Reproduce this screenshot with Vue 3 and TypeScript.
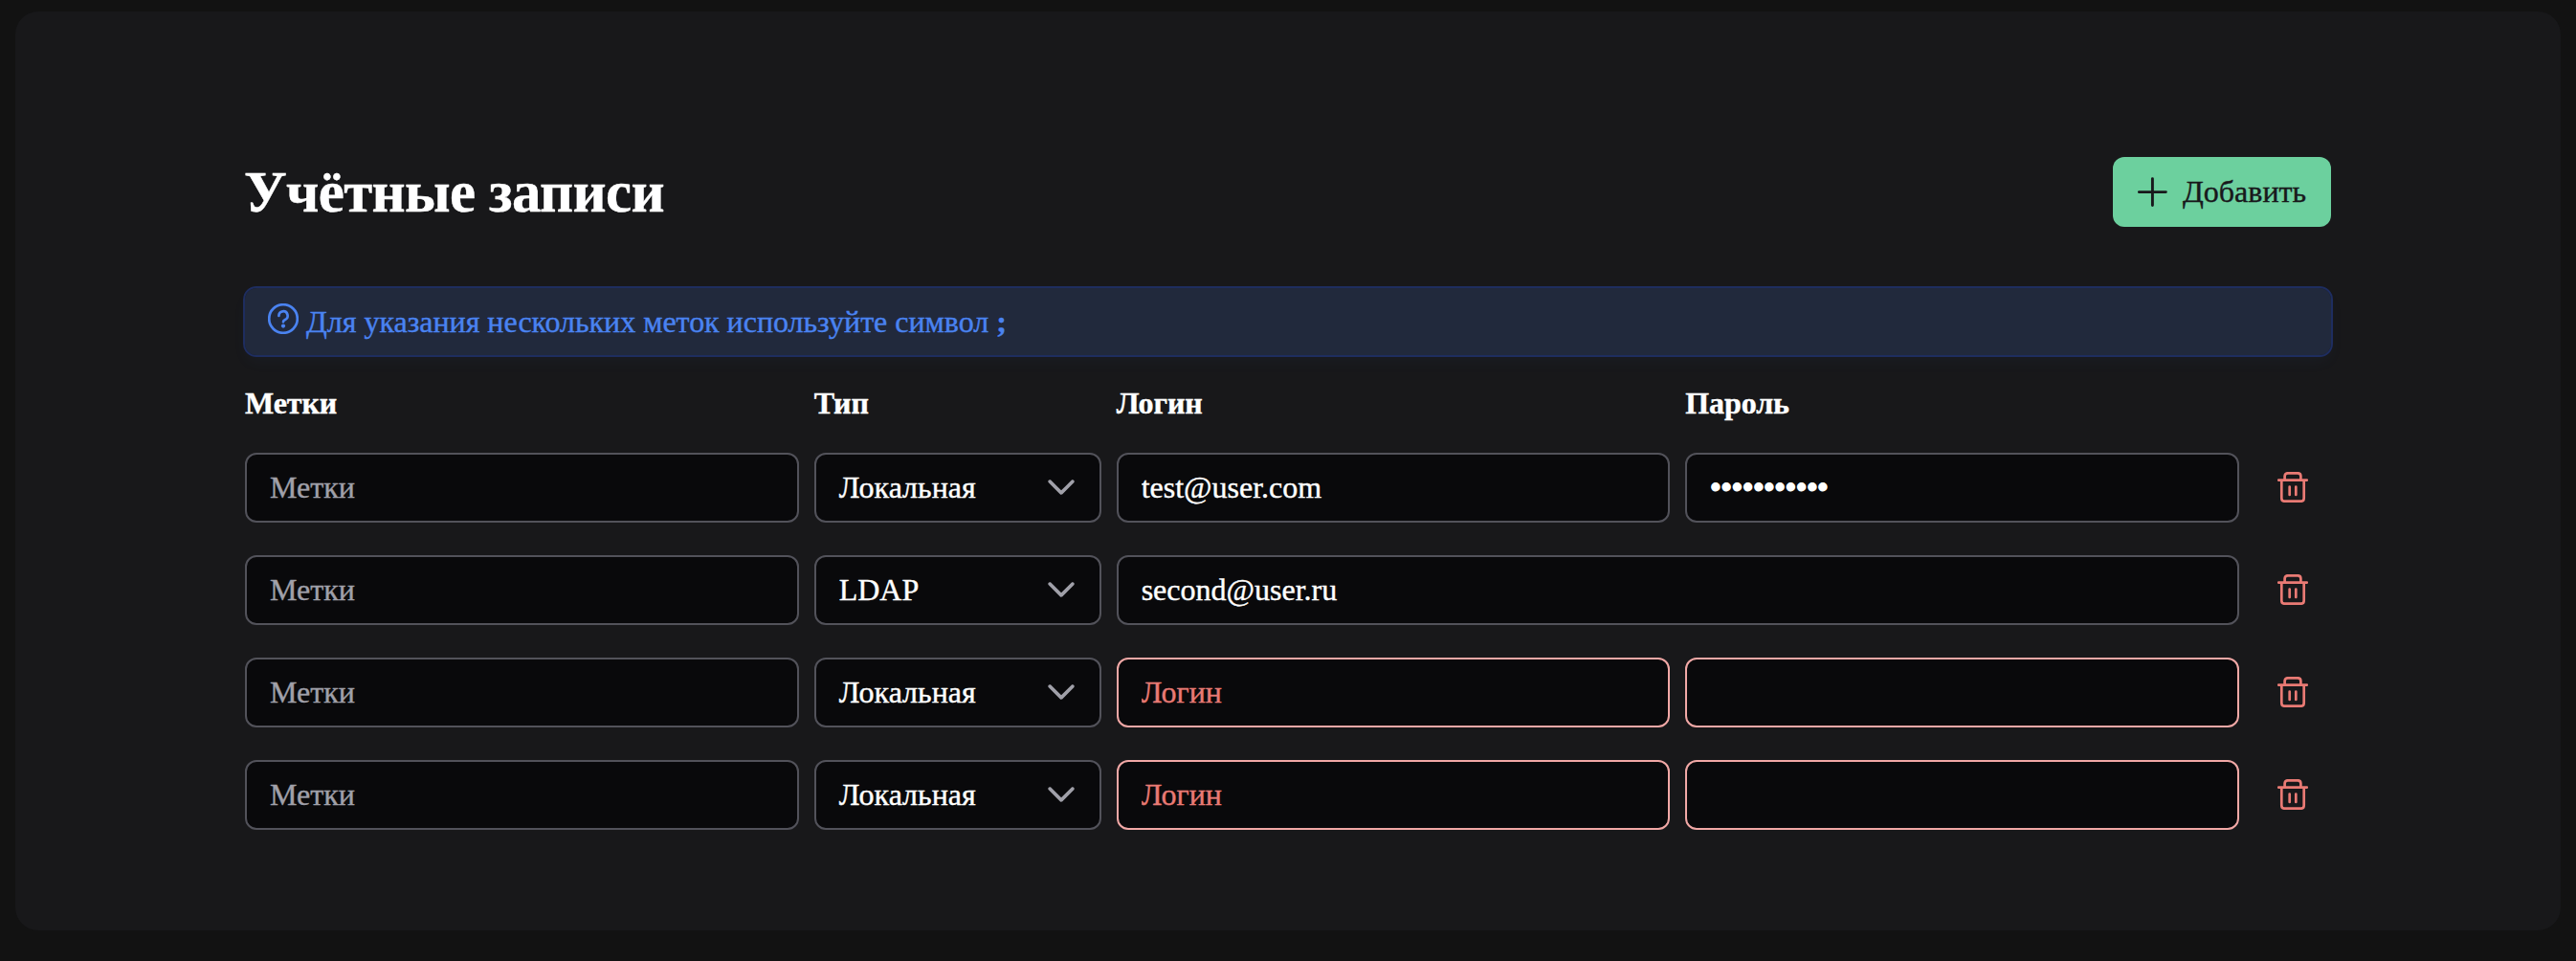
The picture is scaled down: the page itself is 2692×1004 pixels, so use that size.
<script setup lang="ts">
import { ref } from 'vue'

type AccountType = 'local' | 'ldap'

interface Account {
  id: number
  labels: string
  type: AccountType
  login: string
  password: string
  invalid: boolean
}

const typeNames: Record<AccountType, string> = { local: 'Локальная', ldap: 'LDAP' }

const accounts = ref<Account[]>([
  { id: 1, labels: '', type: 'local', login: 'test@user.com', password: 'password123', invalid: false },
  { id: 2, labels: '', type: 'ldap', login: 'second@user.ru', password: '', invalid: false },
  { id: 3, labels: '', type: 'local', login: '', password: '', invalid: true },
  { id: 4, labels: '', type: 'local', login: '', password: '', invalid: true },
])

let nextId = 5

function addAccount(): void {
  accounts.value.push({ id: nextId++, labels: '', type: 'local', login: '', password: '', invalid: false })
}

function removeAccount(id: number): void {
  accounts.value = accounts.value.filter((account) => account.id !== id)
}
</script>

<template>
  <main class="panel">
    <header class="head">
      <h1 class="title">Учётные записи</h1>
      <button class="add" type="button" @click="addAccount">
        <svg class="icon" viewBox="0 0 32 32" aria-hidden="true">
          <path d="M15.4 1.6v28M1.4 15.6h28" />
        </svg>
        <span>Добавить</span>
      </button>
    </header>

    <div class="message">
      <svg class="icon help" viewBox="0 0 32 32" aria-hidden="true">
        <circle cx="16" cy="16" r="14.8" />
        <path d="M11.4 12.9a4.6 4.6 0 1 1 6.6 4.1c-1.4.7-2 1.1-2 2.3" />
        <circle class="dot" cx="16" cy="23.6" r="2.1" />
      </svg>
      <span>Для указания нескольких меток используйте символ <b>;</b></span>
    </div>

    <div class="grid labels">
      <span>Метки</span>
      <span>Тип</span>
      <span>Логин</span>
      <span>Пароль</span>
    </div>

    <div class="rows">
      <div v-for="account in accounts" :key="account.id" class="grid">
        <input v-model="account.labels" class="field" type="text" placeholder="Метки" />
        <div class="field select">
          <span>{{ typeNames[account.type] }}</span>
          <svg class="chevron" viewBox="0 0 14 14" aria-hidden="true">
            <path
              d="M7.01744 10.398C6.91269 10.3985 6.8089 10.378 6.71215 10.3379C6.61541 10.2977 6.52766 10.2386 6.45405 10.1641L1.13907 4.84913C1.03306 4.69404 0.985221 4.5065 1.00399 4.31958C1.02276 4.13266 1.10693 3.95838 1.24166 3.82747C1.37639 3.69655 1.55301 3.61742 1.74039 3.60402C1.92777 3.59062 2.11386 3.64382 2.26584 3.75424L7.01744 8.47394L11.769 3.75424C11.9189 3.65709 12.097 3.61306 12.2748 3.62921C12.4527 3.64535 12.6199 3.72073 12.7498 3.84328C12.8797 3.96582 12.9647 4.12842 12.9912 4.30502C13.0177 4.48162 12.9841 4.662 12.8958 4.81724L7.58083 10.1322C7.50996 10.2125 7.42344 10.2775 7.32656 10.3232C7.22968 10.3689 7.12449 10.3944 7.01744 10.398Z"
            />
          </svg>
        </div>
        <input
          v-model="account.login"
          class="field"
          :class="{ invalid: account.invalid, wide: account.type === 'ldap' }"
          type="text"
          placeholder="Логин"
        />
        <input
          v-if="account.type === 'local'"
          v-model="account.password"
          class="field password"
          :class="{ invalid: account.invalid }"
          type="password"
        />
        <button class="remove" type="button" aria-label="Удалить" @click="removeAccount(account.id)">
          <svg class="icon" viewBox="0 0 32 32" aria-hidden="true">
            <path d="M1.2 8.6h29.6M4.3 8.6v18.9q0 3.2 3.2 3.2h17q3.2 0 3.2-3.2V8.6M7.6 8.6V4.5q0-3.2 3.2-3.2h10.4q3.2 0 3.2 3.2v4.1M12.7 15.5v8.4M19.3 15.5v8.4" />
          </svg>
        </button>
      </div>
    </div>
  </main>
</template>

<style>
body {
  background: #121212;
}
</style>

<style scoped>
.panel {
  box-sizing: border-box;
  height: 960px;
  margin: 12px 16px 0;
  padding: 152px 240px 0;
  border-radius: 24px;
  background: #18181a;
  color: #fff;
  font: 32px/37px "Liberation Serif", "Times New Roman", serif;
  -webkit-text-stroke: 0.4px currentColor;
}

.head {
  display: flex;
  align-items: center;
  justify-content: space-between;
  height: 73px;
}

.title {
  margin: 0 0 0 -1px;
  font-size: 61px;
  line-height: 73px;
  font-weight: 700;
  letter-spacing: -0.65px;
}

.icon {
  display: block;
  flex: none;
  width: 32px;
  height: 32px;
  fill: none;
  stroke: currentColor;
  stroke-width: 2.7;
  stroke-linecap: round;
  stroke-linejoin: round;
}

.add {
  display: flex;
  align-items: center;
  gap: 15px;
  box-sizing: border-box;
  width: 228px;
  height: 73px;
  padding: 0 0 0 26px;
  border: 0;
  border-radius: 12px;
  background: #6cd09e;
  color: #18181b;
  font: inherit;
}

.add .icon {
  stroke-width: 2.9;
}

.message {
  display: flex;
  align-items: flex-start;
  gap: 8px;
  box-sizing: border-box;
  height: 70px;
  margin-top: 64px;
  padding: 16px 24px;
  border-radius: 12px;
  outline: 2px solid #1e2d5f;
  background: #21293c;
  box-shadow: 0 8px 16px rgba(74, 131, 241, 0.04);
  color: #4a83f1;
}

.message span {
  margin-top: 1px;
  letter-spacing: -0.02px;
}

.help .dot {
  fill: currentColor;
  stroke: none;
}

.grid {
  display: grid;
  grid-template-columns: 1fr 300px 1fr 1fr 80px;
  gap: 16px;
}

.labels {
  margin-top: 32px;
  font-weight: 700;
  letter-spacing: -0.1px;
}

.rows {
  display: flex;
  flex-direction: column;
  gap: 34px;
  margin-top: 33px;
}

.field {
  box-sizing: border-box;
  min-width: 0;
  width: 100%;
  height: 73px;
  padding: 0 24px;
  border: 2px solid #52525a;
  border-radius: 12px;
  outline: 0;
  background: #09090b;
  color: #fff;
  font: inherit;
}

.field::placeholder {
  color: #a0a0a9;
  opacity: 1;
  -webkit-text-stroke: 0.4px #a0a0a9;
}

/* Slightly heavier bullets for the masked value */
.password {
  -webkit-text-stroke: 1.8px currentColor;
}

.invalid {
  border-color: #f1a8a6;
}

.invalid::placeholder {
  color: #e97a74;
  -webkit-text-stroke-color: #e97a74;
}

.wide {
  grid-column: span 2;
}

.select {
  display: flex;
  align-items: center;
  justify-content: space-between;
}

.chevron {
  width: 32px;
  height: 32px;
  margin-bottom: 1px;
  fill: #a0a0a9;
}

.remove {
  display: flex;
  align-items: flex-start;
  justify-content: center;
  padding: 20px 0 0;
  border: 0;
  background: none;
  color: #e97a74;
}
</style>
